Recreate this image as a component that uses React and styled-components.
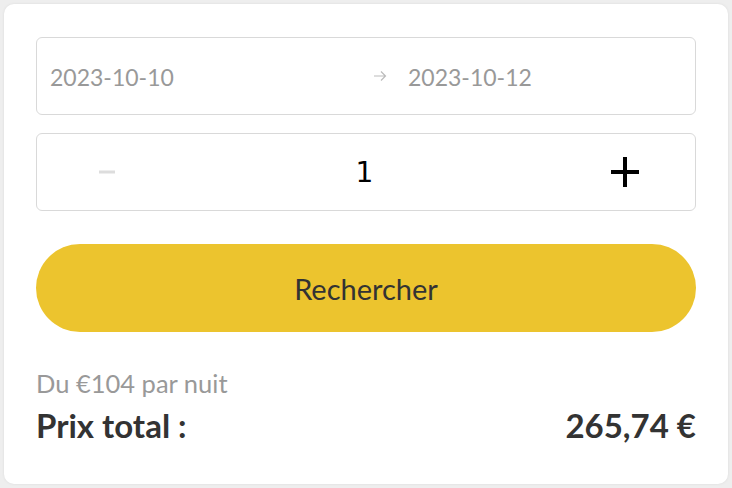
import React, { useState } from "react";
import styled, { createGlobalStyle } from "styled-components";

const Global = createGlobalStyle`
  html, body { margin: 0; padding: 0; background: #eeeeee; }
  body { font-family: "Lato", "Open Sans", sans-serif; }
  * { box-sizing: border-box; }
`;

const Page = styled.div`
  width: 732px;
  height: 488px;
  padding: 4px 4px 4px 4px;
`;

const Card = styled.div`
  background: #ffffff;
  border-radius: 10px;
  box-shadow: 0 0 3px rgba(0, 0, 0, 0.08);
  height: 480px;
  padding: 33px 32px 0 32px;
  display: flex;
  flex-direction: column;
`;

const Field = styled.div`
  height: 78px;
  border: 1px solid #d9d9d9;
  border-radius: 6px;
  display: grid;
  align-items: center;
  margin-bottom: ${(p) => p.$mb || 0}px;
`;

const DateField = styled(Field)`
  grid-template-columns: 315px 30px 1fr;
  padding: 0 13px;
`;

const DateText = styled.span`
  font-size: 23px;
  color: #999999;
  padding-left: ${(p) => p.$pl || 0}px;
  line-height: 1;
  padding-top: 2px;
`;

const Sep = styled.span`
  display: flex;
  justify-content: center;
  align-items: center;
  color: #bbbbbb;
`;

const StepField = styled(Field)`
  grid-template-columns: 140px 1fr 140px;
`;

const StepBtn = styled.button`
  border: 0;
  background: transparent;
  padding: 0;
  height: 100%;
  display: flex;
  align-items: center;
  justify-content: center;
  cursor: pointer;
`;

const Count = styled.span`
  text-align: center;
  font-family: "DejaVu Sans", sans-serif;
  font-size: 28px;
  color: #000;
  line-height: 1;
  padding: 2px 3px 0 0;
`;

const SearchButton = styled.button`
  height: 88px;
  border: 0;
  border-radius: 44px;
  background: #ecc42e;
  color: #333333;
  font-family: "Lato", "Open Sans", sans-serif;
  font-size: 29px;
  margin-top: 33px;
  cursor: pointer;
`;

const PerNight = styled.div`
  margin-top: 36px;
  font-size: 25.5px;
  line-height: 1.2;
  color: #999999;
`;

const TotalRow = styled.div`
  margin-top: 7px;
  display: flex;
  justify-content: space-between;
  align-items: baseline;
  font-size: 33px;
  line-height: 1.2;
  font-weight: 700;
  color: #333333;
`;

const Arrow = () => (
  <svg width="14" height="12" viewBox="0 0 14 12" fill="none" stroke="#bbbbbb" strokeWidth="1.2">
    <path d="M1 6h12M8 1.5L12.5 6 8 10.5" />
  </svg>
);

const Minus = () => (
  <svg width="16" height="4" viewBox="0 0 16 4">
    <rect x="0" y="0.5" width="16" height="3" fill="#dddddd" />
  </svg>
);

const Plus = () => (
  <svg width="28" height="30" viewBox="0 0 28 30">
    <rect x="0" y="13" width="28" height="4" fill="#000" />
    <rect x="12" y="0" width="4" height="30" fill="#000" />
  </svg>
);

export default function App() {
  const [n, setN] = useState(1);
  return (
    <Page>
      <Global />
      <Card>
        <DateField $mb={18}>
          <DateText>2023-10-10</DateText>
          <Sep>
            <Arrow />
          </Sep>
          <DateText $pl={13}>2023-10-12</DateText>
        </DateField>
        <StepField>
          <StepBtn onClick={() => setN(Math.max(1, n - 1))} aria-label="moins">
            <Minus />
          </StepBtn>
          <Count>{n}</Count>
          <StepBtn onClick={() => setN(n + 1)} aria-label="plus">
            <Plus />
          </StepBtn>
        </StepField>
        <SearchButton>Rechercher</SearchButton>
        <PerNight>Du €104 par nuit</PerNight>
        <TotalRow>
          <span>Prix total :</span>
          <span>265,74 €</span>
        </TotalRow>
      </Card>
    </Page>
  );
}
